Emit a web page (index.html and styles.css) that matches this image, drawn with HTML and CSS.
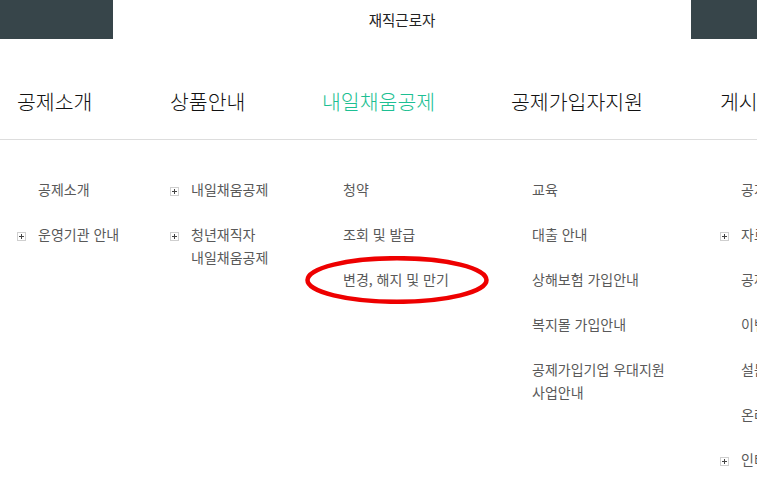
FILE: index.html
```html
<!DOCTYPE html>
<html lang="ko">
<head>
<meta charset="utf-8">
<title>내일채움공제</title>
<link rel="stylesheet" href="styles.css">
</head>
<body>
<div class="topbar">
  <div class="tab tab-dark tab-left"></div>
  <div class="tab tab-active">재직근로자</div>
  <div class="tab tab-dark tab-right"></div>
</div>
<nav class="gnb">
  <a class="gnb-item">공제소개</a>
  <a class="gnb-item">상품안내</a>
  <a class="gnb-item active">내일채움공제</a>
  <a class="gnb-item">공제가입자지원</a>
  <a class="gnb-item">게시판</a>
</nav>
<div class="submenu">
  <ul class="sub-col">
    <li>공제소개</li>
    <li class="has-sub"><span class="plus"></span>운영기관 안내</li>
  </ul>
  <ul class="sub-col">
    <li class="has-sub"><span class="plus"></span>내일채움공제</li>
    <li class="has-sub"><span class="plus"></span>청년재직자 내일채움공제</li>
  </ul>
  <ul class="sub-col">
    <li>청약</li>
    <li>조회 및 발급</li>
    <li class="marked">변경, 해지 및 만기<svg class="mark" viewBox="0 0 184 48" width="184" height="48"><ellipse cx="92" cy="24" rx="89.5" ry="21.8" fill="none" stroke="#ee0000" stroke-width="4.5"/></svg></li>
  </ul>
  <ul class="sub-col">
    <li>교육</li>
    <li>대출 안내</li>
    <li>상해보험 가입안내</li>
    <li>복지몰 가입안내</li>
    <li>공제가입기업 우대지원 사업안내</li>
  </ul>
  <ul class="sub-col sub-last">
    <li>공지사항</li>
    <li class="has-sub"><span class="plus"></span>자료실</li>
    <li>공제소식</li>
    <li>이벤트</li>
    <li>설문조사</li>
    <li>온라인 상담</li>
    <li class="has-sub"><span class="plus"></span>인터넷 민원</li>
  </ul>
</div>
</body>
</html>
```
FILE: styles.css
```css
html, body {
  margin: 0;
  padding: 0;
  background: #fff;
  overflow: hidden;
}
body {
  width: 757px;
  height: 496px;
  font-family: "Noto Sans CJK KR", "Noto Sans", sans-serif;
  color: #222;
  word-break: keep-all;
}
.topbar {
  display: flex;
  height: 39px;
}
.tab-dark {
  background: #37454a;
}
.tab-left {
  width: 113px;
}
.tab-right {
  flex: 1;
}
.tab-active {
  width: 578px;
  display: flex;
  align-items: center;
  justify-content: center;
  font-size: 14.5px;
  color: #222;
  padding-bottom: 1px;
  box-sizing: border-box;
}
.gnb, .submenu {
  display: grid;
  grid-template-columns: 153px 152px 189px 209px 200px;
  padding-left: 17px;
}
.gnb {
  height: 101px;
  padding-top: 24px;
  box-sizing: border-box;
  align-items: center;
  border-bottom: 1px solid #dddddd;
}
.gnb-item {
  font-size: 20.5px;
  font-weight: 300;
  color: #111;
  white-space: nowrap;
  line-height: 28px;
}
.gnb-item.active {
  color: #1dbf93;
}
.submenu {
  padding-top: 38px;
}
.sub-col {
  list-style: none;
  margin: 0;
  padding: 0 8px 0 21px;
}
.sub-last {
  white-space: nowrap;
}
.sub-col li {
  font-size: 14px;
  line-height: 23px;
  color: #595959;
  margin-bottom: 22px;
}
.plus {
  display: inline-block;
  position: relative;
  width: 9px;
  height: 9px;
  border: 1px solid #cfcfcf;
  box-sizing: border-box;
  margin-left: -21px;
  margin-right: 12px;
  vertical-align: -1px;
}
.plus::before, .plus::after {
  content: "";
  position: absolute;
  background: #444;
}
.plus::before {
  left: 1px;
  top: 3px;
  width: 5px;
  height: 1px;
}
.plus::after {
  left: 3px;
  top: 1px;
  width: 1px;
  height: 5px;
}
.marked {
  position: relative;
}
.mark {
  position: absolute;
  left: -38px;
  top: -12px;
}
```
